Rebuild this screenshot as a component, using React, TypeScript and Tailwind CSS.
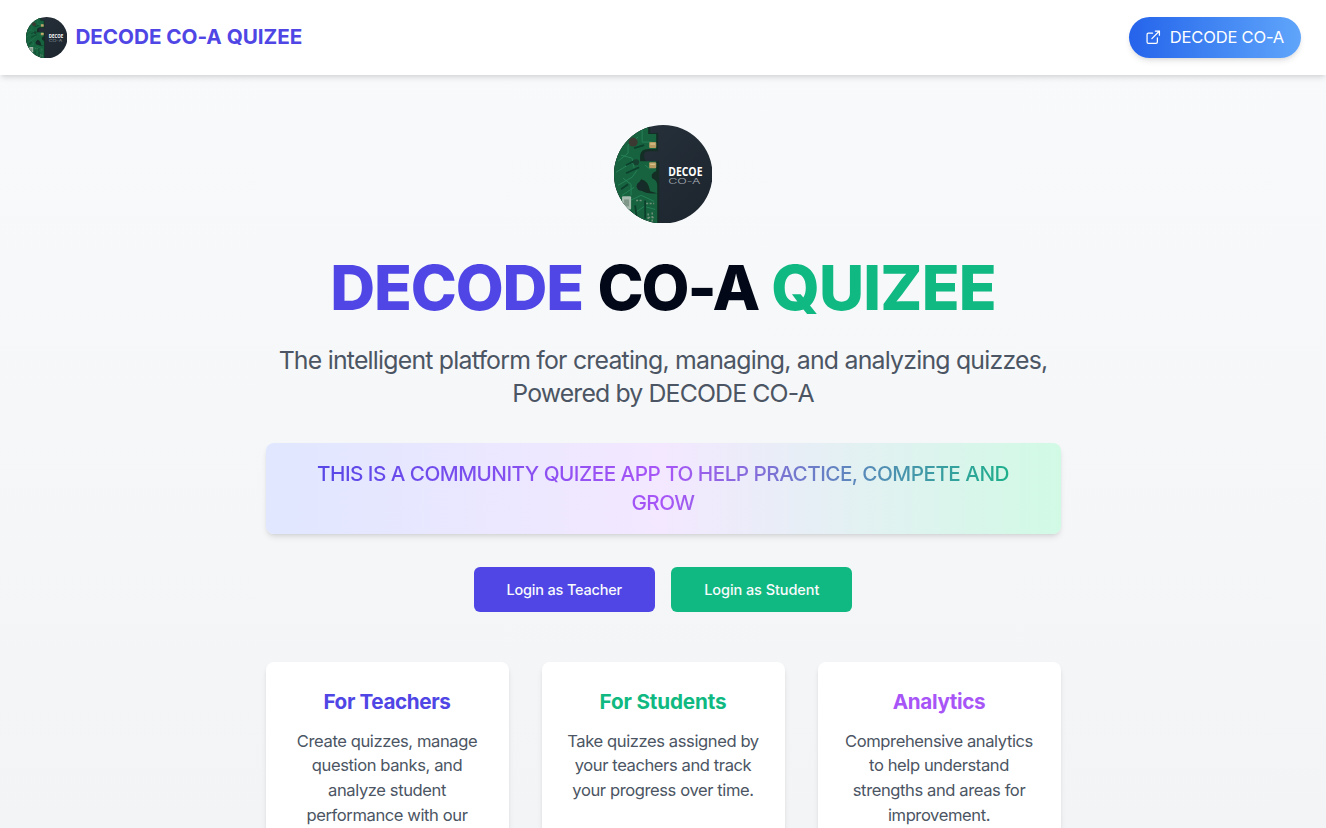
import { type ReactNode } from "react";

function Logo({ className }: { className: string }) {
  return (
    <svg viewBox="0 0 98 98" className={className} role="img" aria-label="DECOE CO-A">
      <defs>
        <clipPath id="disc">
          <circle cx="49" cy="49" r="49" />
        </clipPath>
        <linearGradient id="slate" x1="0" y1="0" x2="1" y2="1">
          <stop offset="0" stopColor="#28323c" />
          <stop offset="1" stopColor="#1c252e" />
        </linearGradient>
      </defs>
      <g clipPath="url(#disc)">
        <rect width="98" height="98" fill="url(#slate)" />
        <path d="M0 0H36V8H44V26H35Q29 26 30 32Q31 37 35 36H45V98H0Z" fill="#142d25" />
        <path d="M0 0H34V9H42V24H34Q27 24 26 30V36H42V46Q36 48 38 53Q43 55 43 60V68L36 66Q34 55 27 54Q22 60 27 65Q32 69 43 68V98H0Z" fill="#17633f" />
        <path d="M4 36L14 28V20L24 12M2 47L17 38H25M4 60L18 52L23 45M8 70L20 62M14 76L27 70L40 76M20 88L30 81L41 84M28 5V17H38M7 30L18 33L20 43M31 40L36 44M9 53L17 59V70" fill="none" stroke="#28845a" strokeWidth="0.9" />
        <path d="M12 40L20 36M7 64L14 59M20 23L30 20M21 80L23 96M31 75V93M12 48L25 42" fill="none" stroke="#0c3f2c" strokeWidth="1.8" />
        <circle cx="19" cy="17" r="4.5" fill="#3b3932" />
        <circle cx="22" cy="37" r="3" fill="#164030" />
        <circle cx="27" cy="61" r="4.5" fill="#172c2a" />
        <rect x="35" y="17" width="7" height="6" rx="1" fill="#b59a62" />
        <rect x="35" y="37" width="7" height="6" rx="1" fill="#b59a62" />
        <path d="M36 19H41M36 39H41" stroke="#e4cd96" strokeWidth="1" />
        <rect x="8" y="71" width="9" height="13" rx="1" fill="#a9bcb0" />
        <rect x="10" y="74" width="5" height="7" fill="#7f9789" />
        <path d="M34 88V97M38 87V97M34 92H40M22 75H28M32 78H40" stroke="#71917a" strokeWidth="1.5" strokeDasharray="2 1.5" />
        <text x="54" y="50.7" textLength="34" lengthAdjust="spacingAndGlyphs" fill="#fff" fontFamily="Open Sans, sans-serif" fontWeight="700" fontSize="11.5">DECOE</text>
        <text x="54" y="59" textLength="32" lengthAdjust="spacingAndGlyphs" fill="#a7adb5" fontFamily="Inter, sans-serif" fontWeight="300" fontSize="7.5">CO-A</text>
      </g>
    </svg>
  );
}

function ExternalLink() {
  return (
    <svg viewBox="0 0 24 24" className="size-[16.5px] shrink-0" fill="none" stroke="currentColor" strokeWidth="1.8" strokeLinecap="round" strokeLinejoin="round">
      <path d="M11 6H5a2 2 0 0 0-2 2v11a2 2 0 0 0 2 2h11a2 2 0 0 0 2-2v-6M15 3h6v6M10 14 21 3" />
    </svg>
  );
}

function Card({ title, color, children }: { title: string; color: string; children: ReactNode }) {
  return (
    <section className="h-[220px] rounded-[8px] bg-white p-[24.8px] pt-[25.3px] shadow-md">
      <h3 className={`mb-[12.4px] text-[20.7px] leading-[29px] font-bold ${color}`}>{title}</h3>
      <p className="text-[16.56px] leading-[24.8px] tracking-[-0.4px] text-[#4b5563]">{children}</p>
    </section>
  );
}

export default function App() {
  return (
    <div className="flex h-[828px] flex-col overflow-hidden bg-linear-to-b from-[#f9fafb] to-[#f3f4f6] font-[Inter,sans-serif] text-[#020817]">
      <header className="flex h-[74.5px] shrink-0 items-center justify-between bg-white px-[25.5px] shadow-md">
        <div className="flex items-center gap-[8.5px]">
          <Logo className="size-[41.4px]" />
          <span className="text-[20.7px] leading-[28px] font-bold tracking-[-0.04px] text-[#4f46e5]">DECODE CO-A QUIZEE</span>
        </div>
        <a href="#" className="flex h-[41.4px] items-center gap-[8.3px] rounded-full bg-linear-to-r from-[#2563eb] to-[#60a5fa] px-[16.5px] text-[16.56px] tracking-[-0.2px] text-white shadow-md">
          <ExternalLink />
          DECODE CO-A
        </a>
      </header>
      <main className="mx-auto flex w-[795px] flex-col items-center pt-[50px] text-center">
        <Logo className="size-[98.5px]" />
        <h1 className="mt-[34px] text-[62.1px] leading-[62.1px] font-extrabold tracking-[-1.55px] whitespace-nowrap">
          <span className="mr-[2.5px] tracking-[-1.15px] text-[#4f46e5]">DECODE</span> <span className="tracking-[-2.1px]">CO-A</span>{" "}
          <span className="ml-[1px] tracking-[-0.8px] text-[#10b981]">QUIZEE</span>
        </h1>
        <p className="mt-[24.7px] text-[24.84px] leading-[33.1px] tracking-[-0.78px] whitespace-nowrap text-[#4b5563]">
          The intelligent platform for creating, managing, and analyzing quizzes,
          <br />
          <span className="tracking-[-0.86px]">Powered by DECODE CO-A</span>
        </p>
        <div className="mt-[33px] w-full rounded-[8px] bg-linear-to-r/srgb from-[#e0e7ff] via-[#f3e8ff] to-[#d1fae5] p-[16.5px] shadow-md">
          <p className="bg-linear-to-r/srgb from-[#4f46e5] via-[#a855f7] to-[#10b981] bg-clip-text text-[20.7px] leading-[29px] font-medium tracking-[-0.53px] text-transparent">
            THIS IS A COMMUNITY QUIZEE APP TO HELP PRACTICE, COMPETE AND
            <br />
            GROW
          </p>
        </div>
        <div className="mt-[33px] flex gap-[16.5px]">
          <button className="h-[45.5px] w-[181px] rounded-[6px] bg-[#4f46e5] text-[14.5px] font-medium tracking-[-0.19px] text-[#f8fafc]">Login as Teacher</button>
          <button className="h-[45.5px] w-[181px] rounded-[6px] bg-[#10b981] text-[14.5px] font-medium tracking-[-0.07px] text-[#f8fafc]">Login as Student</button>
        </div>
        <div className="mt-[49.4px] grid w-full grid-cols-3 gap-[33px]">
          <Card title="For Teachers" color="tracking-[-0.38px] text-[#4f46e5]">
            Create quizzes, manage question banks, and analyze student performance with our
          </Card>
          <Card title="For Students" color="tracking-[-0.16px] text-[#10b981]">
            Take quizzes assigned by your teachers and track your progress over time.
          </Card>
          <Card title="Analytics" color="tracking-[-0.38px] text-[#a855f7]">
            Comprehensive analytics to help understand strengths and areas for improvement.
          </Card>
        </div>
      </main>
    </div>
  );
}
